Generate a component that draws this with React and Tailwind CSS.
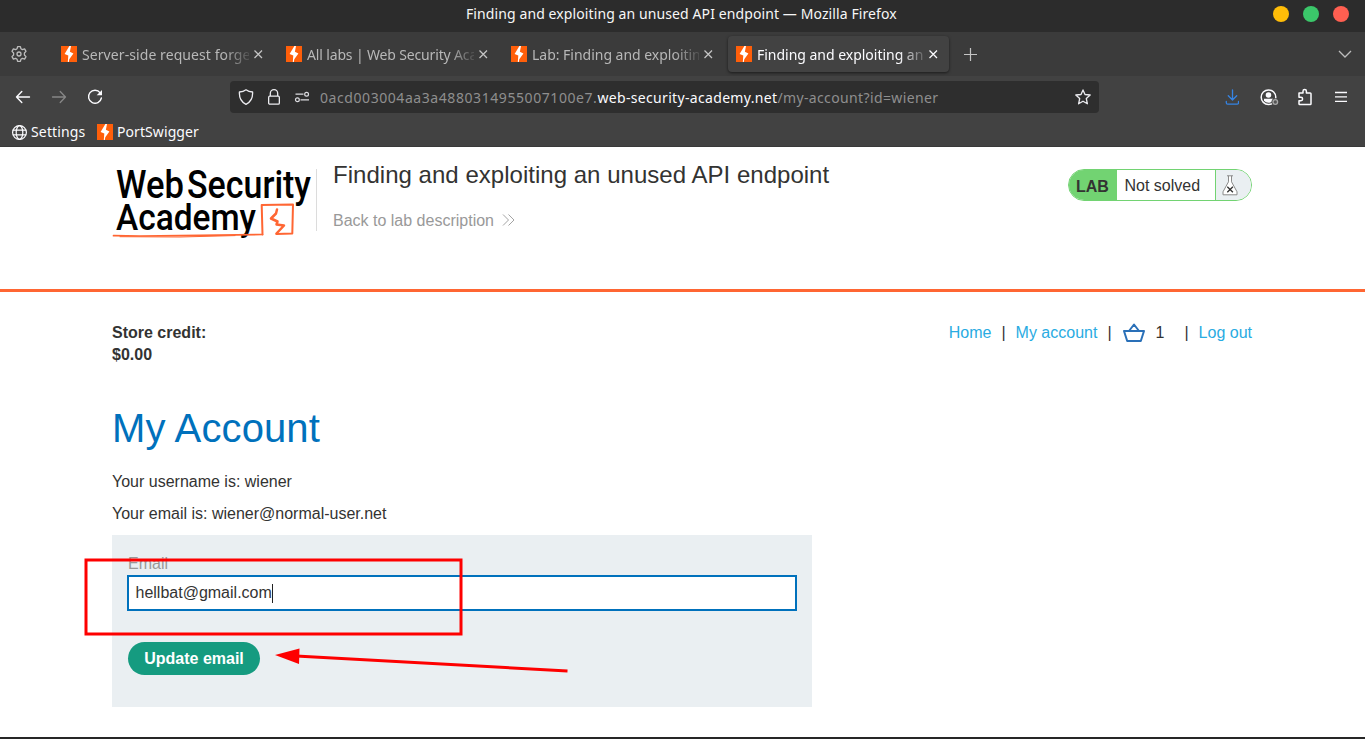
import React from "react";

const ui = "font-['Noto_Sans',sans-serif]";

function Bolt({ className = "" }) {
  return (
    <svg width="16" height="16" viewBox="0 0 16 16" className={"shrink-0 " + className}>
      <rect width="16" height="16" fill="#ff5f0a" />
      <path d="M8.400 0H10L8.900 5.800 12.400 7.500 8.300 13.300 7.800 16H6.800L7.300 9.600 3.600 8z" fill="#fff" />
    </svg>
  );
}

function Close({ color }) {
  return (
    <svg width="9" height="9" viewBox="0 0 9 9" className="shrink-0">
      <path d="M0.500 0.500 8 8M8 0.500 0.500 8" stroke={color} strokeWidth="1.300" />
    </svg>
  );
}

const tabs = [
  { text: "Server-side request forgery", spacing: "tracking-[0.08px]" },
  { text: "All labs | Web Security Academy", spacing: "tracking-[-0.15px]" },
  { text: "Lab: Finding and exploiting an", spacing: "tracking-[-0.02px]" },
  { text: "Finding and exploiting an unused", spacing: "tracking-[-0.02px]", active: true },
];

function Tab({ text, spacing, active }) {
  return (
    <div
      className={
        "flex h-9 w-[221px] items-center rounded pl-2 " +
        (active ? "bg-[#424242] shadow-[0_1px_3px_rgba(0,0,0,0.55)]" : "")
      }
    >
      <Bolt />
      <div
        className={
          "ml-[5px] w-[167px] overflow-hidden whitespace-nowrap pt-px text-[14px] leading-5 [mask-image:linear-gradient(to_right,black_142px,transparent_172px)] " +
          spacing +
          (active ? " text-[#fbfbfe]" : " text-[#b8b8b8]")
        }
      >
        {text}
      </div>
      <div className="ml-[5px] flex">
        <Close color={active ? "#fbfbfe" : "#c4c4c4"} />
      </div>
    </div>
  );
}

function Browser() {
  return (
    <header className={ui}>
      <div className="flex h-8 items-center bg-[#2c2c2c]">
        <div className="w-[1273px] pl-[466px] pb-[4px] text-[14px] leading-5 whitespace-nowrap text-[#f7f7f7] tracking-[0.1px]">
          Finding and exploiting an unused API endpoint — Mozilla Firefox
        </div>
        <div className="flex gap-[14px] pb-1">
          <span className="size-4 rounded-full bg-[#ffbd08]" />
          <span className="size-4 rounded-full bg-[#3bc76a]" />
          <span className="size-4 rounded-full bg-[#ff5f51]" />
        </div>
      </div>

      <div className="flex h-11 items-center bg-[#3b3b3b]">
        <svg width="16" height="16" viewBox="0 0 16 16" className="ml-[11px] mr-[26px] shrink-0" fill="none" stroke="#bdbdbd" strokeWidth="1.300" strokeLinejoin="round">
          <path d="M6.600 .7h2.800l.5 2 1.500.9 2.200-.7 1.400 2.500-1.600 1.600v2l1.600 1.600-1.400 2.500-2.200-.7-1.500.9-.5 2H6.600l-.5-2-1.500-.9-2.200.7L1 10.600l1.600-1.600V7L1 5.400l1.400-2.500 2.200.7 1.500-.9z" />
          <circle cx="8" cy="8" r="2" />
        </svg>
        <div className="flex gap-1">
          {tabs.map((t, i) => (
            <Tab key={i} {...t} />
          ))}
        </div>
        <svg width="13" height="13" viewBox="0 0 13 13" className="ml-[15px]" stroke="#c4c4c4" strokeWidth="1.2">
          <path d="M6.500 0v13M0 6.500h13" />
        </svg>
        <svg width="14" height="8" viewBox="0 0 14 8" className="mr-[13px] ml-auto" fill="none" stroke="#bdbdbd" strokeWidth="1.300">
          <path d="M1 1l6 6 6-6" />
        </svg>
      </div>

      <div className="flex h-[42px] items-center bg-[#424242]">
        <svg width="16" height="16" viewBox="0 0 16 16" className="ml-[15px]" fill="none" stroke="#fbfbfe" strokeWidth="1.400" strokeLinecap="round" strokeLinejoin="round">
          <path d="M6.800 2.500 1.500 8l5.300 5.500M1.500 8h13" />
        </svg>
        <svg width="16" height="16" viewBox="0 0 16 16" className="ml-5" fill="none" stroke="#878787" strokeWidth="1.300" strokeLinecap="round" strokeLinejoin="round">
          <path d="M9.200 2.500 14.500 8l-5.300 5.500M14.500 8h-13" />
        </svg>
        <svg width="16" height="16" viewBox="0 0 16 16" className="ml-5" fill="none">
          <path d="M13.200 3.800A6.500 6.500 0 1 0 14.400 9" stroke="#fbfbfe" strokeWidth="1.400" strokeLinecap="round" />
          <path d="M15 .9v5.300H9.700z" fill="#fbfbfe" />
        </svg>
        <div className="ml-[127px] flex h-8 w-[869px] items-center rounded bg-[#2e2e2e] pl-2">
          <svg width="16" height="16" viewBox="0 0 16 16" fill="none" stroke="#ececf0" strokeWidth="1.300" strokeLinejoin="round">
            <path d="M8 .8C6.200 2.200 3.700 2.900 1.400 3c-.3 5.500 1.700 10 6.600 12.300C12.900 13 14.900 8.500 14.600 3 12.300 2.900 9.800 2.200 8 .8z" />
          </svg>
          <svg width="14" height="16" viewBox="0 0 14 16" className="ml-[13px]" fill="none" stroke="#ececf0" strokeWidth="1.300">
            <rect x="1.650" y="7.200" width="10.700" height="8" rx="1.200" />
            <path d="M3.300 7V4.400a3.700 3.700 0 0 1 7.400 0V7" />
          </svg>
          <svg width="16" height="12" viewBox="0 0 16 12" className="ml-[13px]" fill="none" stroke="#dcdce0" strokeWidth="1.200">
            <path d="M1.500 3.200h8M6.500 8.800h8.500" />
            <circle cx="12.600" cy="3.200" r="1.900" />
            <circle cx="3.400" cy="8.800" r="1.900" />
          </svg>
          <div className="ml-[10px] w-[735px] pt-px text-[14px] leading-5 whitespace-nowrap text-[#8f8f8f]">
            <span className="tracking-[0.57px]">0acd003004aa3a4880314955007100e7.</span>
            <span className="tracking-[0.33px] text-[#fbfbfe]">web-security-academy.net</span>
            <span className="tracking-[0.37px]">/my-account?id=wiener</span>
          </div>
          <svg width="16" height="16" viewBox="0 0 16 16" className="ml-5 shrink-0" fill="none" stroke="#ececf0" strokeWidth="1.300" strokeLinejoin="round">
            <path d="M8 .9l2 4.600 5.200.5-3.900 3.500 1.100 5.300L8 12.200l-4.400 2.600 1.100-5.300L.8 6 6 5.500z" />
          </svg>
        </div>
        <svg width="14" height="16" viewBox="0 0 14 16" className="mr-px ml-[126px]" fill="none" stroke="#3584e4" strokeWidth="1.300" strokeLinecap="round" strokeLinejoin="round">
          <path d="M7.500 .8v10M3.300 6.800l4.200 4.200 4.200-4.200M1.300 12.500v1.200c0 .9.600 1.500 1.500 1.500h9.200c.9 0 1.500-.6 1.500-1.500v-1.200" />
        </svg>
        <svg width="19" height="17" viewBox="0 0 19 17" className="ml-5" fill="none">
          <circle cx="8.500" cy="8.200" r="7.300" stroke="#fbfbfe" strokeWidth="1.500" />
          <circle cx="8.500" cy="6" r="2.800" fill="#fbfbfe" />
          <path d="M4 9.800h9v1.500c-1.200 1.800-2.800 2.400-4.500 2.400S5 13.100 4 11.300z" fill="#fbfbfe" />
          <circle cx="15.300" cy="13" r="3.800" fill="#424242" />
          <circle cx="15.300" cy="13" r="2.300" stroke="#a8a8a8" strokeWidth="1.300" fill="#555" />
        </svg>
        <svg width="16" height="18" viewBox="0 0 16 18" className="ml-[18px]" fill="none" stroke="#fbfbfe" strokeWidth="1.500" strokeLinejoin="round">
          <path d="M2 5h4V3.200a1.700 1.700 0 0 1 3.400 0V5h3.800c.5 0 .8.300.8.800v9.900c0 .500-.3.800-.8.800H2.800c-.5 0-.8-.3-.8-.8v-3h1.900a1.700 1.700 0 0 0 0-3.400H2z" />
        </svg>
        <svg width="12" height="12" viewBox="0 0 12 12" className="ml-[22px]" stroke="#fbfbfe" strokeWidth="1.300">
          <path d="M0 1.500h12M0 5.900h12M0 10.300h12" />
        </svg>
      </div>

      <div className="flex h-[29px] items-center border-b border-[#393939] bg-[#424242] pb-[1px] text-[14px] leading-5 text-[#fbfbfe]">
        <svg width="16" height="16" viewBox="0 0 16 16" className="ml-[11px] mr-[4px]" fill="none" stroke="#fbfbfe" strokeWidth="1.200">
          <circle cx="8.500" cy="8.500" r="6.900" />
          <ellipse cx="8.500" cy="8.500" rx="3.300" ry="6.900" />
          <path d="M1.800 6.200h13.400M1.800 10.800h13.400" />
        </svg>
        <span className="w-[54px] whitespace-nowrap tracking-[0.15px]">Settings</span>
        <Bolt className="ml-3 mr-1" />
        <span className="whitespace-nowrap tracking-[0.08px]">PortSwigger</span>
      </div>
    </header>
  );
}

function Logo() {
  return (
    <svg width="204" height="76" viewBox="112 166 204 76" className="font-[Roboto,sans-serif]">
      <g fill="#000" fontWeight="500">
        <text x="116" y="198" fontSize="38" textLength="68" lengthAdjust="spacingAndGlyphs">Web</text>
        <text x="187" y="198" fontSize="38" textLength="124" lengthAdjust="spacingAndGlyphs">Security</text>
        <text x="116" y="230" fontSize="36" textLength="140" lengthAdjust="spacingAndGlyphs">Academy</text>
      </g>
      <g fill="none" stroke="#ff6633" strokeLinejoin="round" strokeLinecap="round">
        <path d="M262.500 234.500 261.700 205 293 204.500 292.300 233.500 276.500 234" strokeWidth="2" />
        <path d="M113.500 235.700 140 236 200 235.300 262.500 234.500" strokeWidth="1.700" />
        <path d="M120 236.700 180 237 235 235.600" strokeWidth="1" />
        <path d="M277 209.500 276 213.500 271 218.500 277.500 221.500 276.500 224.500 284 225.500 276.500 233.500" strokeWidth="2.500" />
      </g>
    </svg>
  );
}

function LabHeader() {
  return (
    <div className="h-[145px] border-b-[3px] border-[#ff6633] pr-[113px] pl-[112px]">
      <div className="flex">
        <div className="pt-[19px]">
          <Logo />
        </div>
        <div className="mt-[22px] h-[62px] w-px bg-[#dcdcdc]" />
        <div className="ml-4 pt-3 text-[#333332]">
          <h2 className="text-[24px] leading-8 tracking-[0.025px] whitespace-nowrap">Finding and exploiting an unused API endpoint</h2>
          <div className="mt-[19px] flex items-center text-[16px] leading-[22px] text-[#999999]">
            <span>Back to lab description</span>
            <svg width="13" height="14" viewBox="0 0 13 14" className="ml-2" fill="none" stroke="#999999" strokeWidth="0.900">
              <path d="M1 .5 6.500 6 1 11.500M6.500 .5 12 6 6.500 11.500" />
            </svg>
          </div>
        </div>
        <div className="mt-[22px] ml-auto flex h-8 w-[184px] items-stretch overflow-hidden rounded-full border border-[#72d372] bg-white text-[16px] leading-8">
          <div className="w-12 bg-[#72d372] pt-px pl-[7px] font-bold text-[#333332]">LAB</div>
          <div className="w-[99px] border-r border-[#72d372] pl-[7.500px] leading-[31px] whitespace-nowrap text-[#333332]">Not solved</div>
          <div className="flex flex-1 items-center bg-[#eaeff2] pl-[6px]">
            <svg width="17" height="21" viewBox="0 0 17 21" fill="none">
              <path d="M5 .8h6M6.500 .8v6L1 16.800v3h14v-3L9.500 6.800v-6" fill="#fff" stroke="#8a8a8a" strokeWidth="1" />
              <path d="M5.300 11.700l5.600 5.600M10.900 11.700l-5.600 5.600" stroke="#333" strokeWidth="1.300" />
            </svg>
          </div>
        </div>
      </div>
    </div>
  );
}

function Account() {
  return (
    <main className="pr-[113px] pl-[112px] text-[16px] text-[#333332]">
      <div className="flex justify-between pt-[29px]">
        <div className="pt-px leading-[22px] font-bold">
          <p>Store credit:</p>
          <p>$0.00</p>
        </div>
        <nav className="flex h-6 items-center leading-6 text-[#29abe2]">
          <a>Home</a>
          <span className="ml-[10px] text-[#333332]">|</span>
          <a className="ml-[10px]">My account</a>
          <span className="ml-[10px] text-[#333332]">|</span>
          <svg width="24" height="20" viewBox="0 0 24 20" className="ml-[10px]" fill="none" stroke="#2a70b8" strokeWidth="2" strokeLinejoin="round">
            <path d="M2 8h20l-3.200 10H5.200zM7 8l5-6.500L17 8" />
          </svg>
          <span className="ml-[10px] text-[#333332]">1</span>
          <span className="ml-5 text-[#333332]">|</span>
          <a className="ml-[10px]">Log out</a>
        </nav>
      </div>
      <h1 className="mt-[37px] text-[40px] leading-[50px] tracking-[0.12px] text-[#0071bc]">My Account</h1>
      <p className="mt-[19px] leading-5">Your username is: wiener</p>
      <p className="mt-3 leading-5">Your email is: wiener@normal-user.net</p>
      <form className="relative mt-[11px] h-[172px] w-[700px] bg-[#eaeff2] px-[15px] pt-[18px]">
        <label className="block pl-px leading-[22px] text-[#999999]">Email</label>
        <div className="flex h-9 w-[670px] items-center border-2 border-[#0071bc] bg-white pl-[6.500px]">
          <span className="leading-5">hellbat@gmail.com</span>
          <span className="h-[19px] w-px bg-[#222]" />
        </div>
        <button type="button" className="mt-[31px] ml-px block h-[33px] w-[132px] rounded-full bg-[#159b80] text-center leading-[33px] font-bold text-white">
          Update email
        </button>
        <svg width="500" height="130" viewBox="80 550 500 130" className="absolute top-[15px] left-[-32px]">
          <rect x="86" y="560" width="375" height="74" fill="none" stroke="#fe0000" strokeWidth="3" />
          <path d="M296 656 567.500 671" stroke="#fe0000" strokeWidth="3" />
          <path d="M275 655 299.500 648.500 299 664z" fill="#fe0000" />
        </svg>
      </form>
    </main>
  );
}

export default function App() {
  return (
    <div className="flex h-[739px] w-[1365px] flex-col overflow-hidden bg-white font-['Liberation_Sans',Arial,sans-serif]">
      <Browser />
      <LabHeader />
      <Account />
      <div className="mt-auto h-[2px] shrink-0 bg-[#262626]" />
    </div>
  );
}
